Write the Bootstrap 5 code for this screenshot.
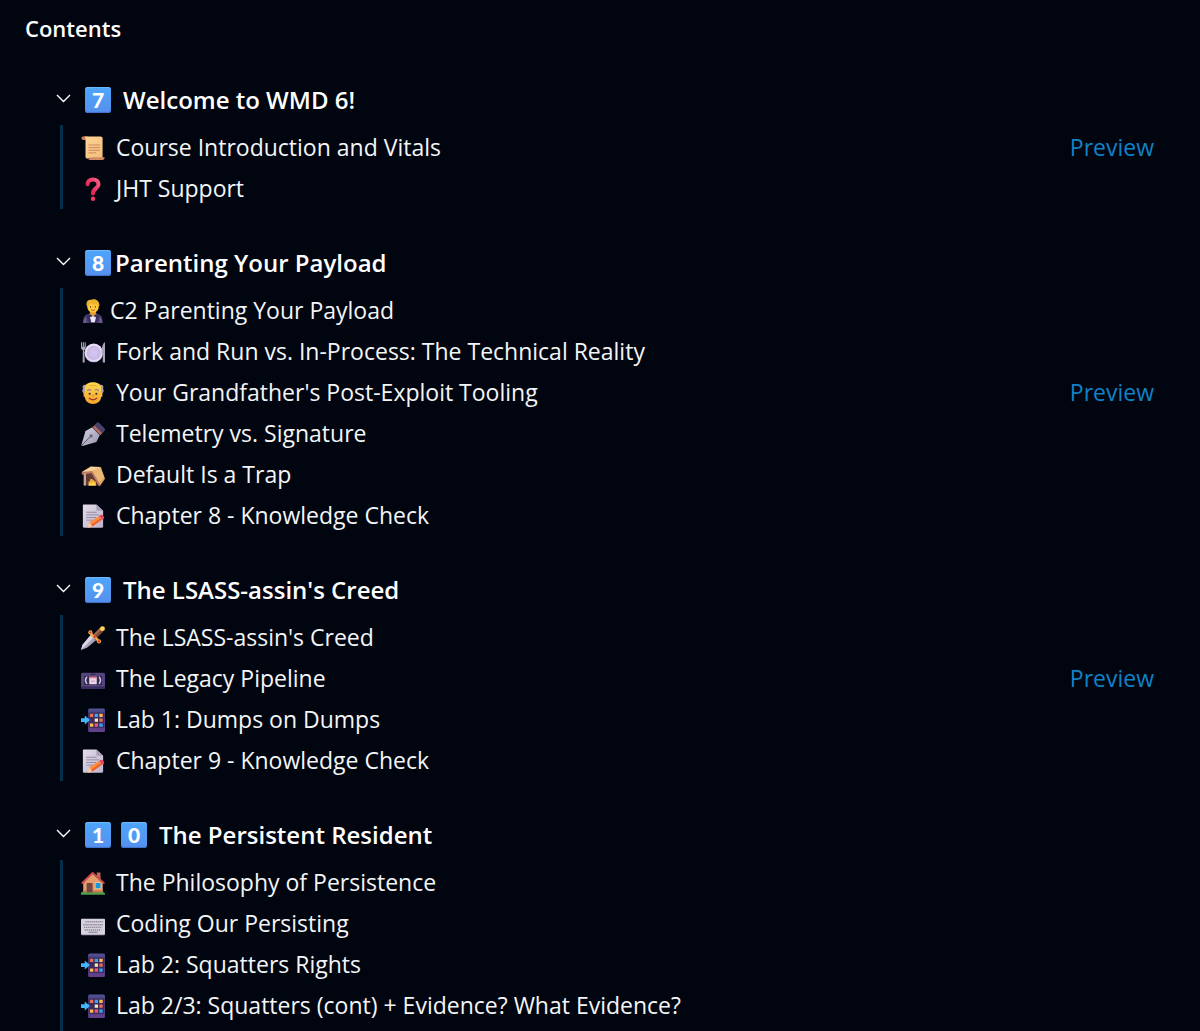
<!DOCTYPE html>
<html lang="en" data-bs-theme="dark">
<head>
<meta charset="utf-8">
<meta name="viewport" content="width=device-width, initial-scale=1">
<title>Contents</title>
<link href="https://cdn.jsdelivr.net/npm/bootstrap@5.3.0/dist/css/bootstrap.min.css" rel="stylesheet">
<style>
  body { background: #01050f; color: #f4f5f7; font-family: "Segoe UI", "Open Sans", "Noto Sans", sans-serif; font-size: 23px; }
  .toc-title { font-size: 22px; font-weight: 600; line-height: 30px; padding: 13px 25px 32px; }
  .toc { padding: 0 46px 0 56px; }
  .chapter + .chapter { margin-top: 29px; }
  .chapter-toggle { height: 50px; color: #fff; font-size: 24px; font-weight: 600; line-height: 50px; }
  .chapter-name { padding-left: 2px; }
  .chevron { width: 15px; height: 9px; margin: 0 14px 3px 0; fill: none; stroke: #fff; stroke-width: 1.4; }
  .chapter-toggle.collapsed .chevron { transform: rotate(-90deg); }
  .keycap { width: 26px; height: 26px; margin-right: 10px; border-radius: 3px; background: linear-gradient(#4da6fb, #5590ee); box-shadow: inset 0 -1px 1px #3f70c8, inset 0 1px 1px #6fbcff; color: #fff; font: 900 21px/26px Lato, sans-serif; text-align: center; }
  .snug { margin-right: 2px; }
  .lessons { margin-left: 4px; border-left: 3px solid #04304d; padding: 2px 0 0 18px; }
  .lesson { min-height: 41px; line-height: 41px; }
  .emoji { width: 24px; height: 24px; margin-right: 11px; }
  .close-set { margin-right: 5px; }
  .preview { color: #1181c8; text-decoration: none; }
  .preview:hover { text-decoration: underline; }
</style>
<script src="https://cdn.jsdelivr.net/npm/bootstrap@5.3.0/dist/js/bootstrap.bundle.min.js"></script>
</head>
<body class="d-flex flex-column min-vh-100">
<svg class="position-absolute" width="0" height="0" aria-hidden="true">
  <defs>
    <linearGradient id="gScroll" x1="0" y1="0" x2="1" y2="1"><stop stop-color="#ffd596"/><stop offset="1" stop-color="#f2bd7b"/></linearGradient>
    <linearGradient id="gRed" x1="1" y1="0" x2="0" y2="1"><stop stop-color="#fb5a83"/><stop offset="1" stop-color="#d61548"/></linearGradient>
    <linearGradient id="gFace" x1="0" y1="0" x2="0" y2="1"><stop stop-color="#ffd94f"/><stop offset="1" stop-color="#f4a52c"/></linearGradient>
    <linearGradient id="gPhone" x1="0" y1="0" x2="0" y2="1"><stop stop-color="#55569d"/><stop offset=".25" stop-color="#463a75"/><stop offset="1" stop-color="#63418e"/></linearGradient>
    <linearGradient id="gPaper" x1="0" y1="0" x2="1" y2="1"><stop stop-color="#e2dcea"/><stop offset="1" stop-color="#bdb4cd"/></linearGradient>
    <linearGradient id="gSteel" x1="0" y1="0" x2="1" y2="1"><stop stop-color="#d6d4e2"/><stop offset="1" stop-color="#9693ad"/></linearGradient>
    <radialGradient id="gPlate"><stop stop-color="#d7c6f2"/><stop offset="1" stop-color="#c6b7e2"/></radialGradient>
  </defs>
  <symbol id="scroll" viewBox="0 0 32 32">
    <path fill="#c67c5d" d="M3 .5h6v4.700H3A2.700 2.700 0 0 1 .4 2.700C.4 1.400 1.400 .5 3 .5z"/>
    <path fill="url(#gScroll)" d="M4 .5h22c1.800 0 2.800 1 2.800 2.800V30H8.500C6.800 30 6 29 6 27.500V4.500C6 2.500 5.500 1.200 4 .5z"/>
    <path fill="#d38a62" d="M12 28.400h19.600c0 2.200-1.300 3.600-3.300 3.600H8.600c2 0 3.400-1.500 3.400-3.600z"/>
    <path stroke="#c77f55" stroke-width="1.200" d="M10 12h15M10 15.500h15M10 19h15M10 22.500h10"/>
  </symbol>
  <symbol id="question" viewBox="0 0 32 32">
    <path fill="none" stroke="url(#gRed)" stroke-width="5.600" stroke-linecap="round" d="M8.700 9.500c.4-4 3.200-6.200 7.300-6.200 4.300 0 7.300 2.500 7.300 6.200 0 5.500-7.500 5.800-7.300 12.300"/>
    <circle cx="16" cy="29" r="3" fill="#ee3863"/>
  </symbol>
  <symbol id="suit" viewBox="0 0 32 32">
    <path fill="#4b4170" d="M3 32v-3.500C3 22 8 19 16 19s12.500 3 12.500 9.500V32z"/>
    <path fill="#70569a" d="M3 32c0-3 1-6 4-8v8zm25.500 0c0-3-1-6-4-8v8z"/>
    <path fill="#eee6f5" d="M11.500 19h9L19 31h-6z"/>
    <path fill="#392f58" d="M11 19l5 3.500 5-3.500v5.500l-5-2-5 2zM10 20l4 12h-3l-4-9zM22 20l-4 12h3l4-9z"/>
    <path fill="#e8992c" d="M12 14h8v6l-4 3-4-3z"/>
    <path fill="#ffc83d" d="M8.500 7c0-4 3-5.500 7.500-5.500S23.500 4 23.500 8v3c0 4-3.500 7-7.500 7s-7.500-3-7.500-7z"/>
    <path fill="#eeb22d" d="M7.500 9C6.500 3.500 9 1 13 1c4-2 12-.5 11.500 8l-2 1.500V7.200c-4 .5-8-.2-10-1.700-1 2-2.700 2.200-3.200 5z"/>
    <path stroke="#714333" stroke-width="1.500" stroke-linecap="round" d="M12.700 10v1M19.200 10v1"/><path fill="none" stroke="#bd4a24" stroke-width="1.200" d="M13.500 14.500q2.500 1.500 5 0"/>
  </symbol>
  <symbol id="plate" viewBox="0 0 32 32">
    <circle cx="17" cy="17.500" r="12.300" fill="#bcabd9"/><circle cx="17" cy="16.800" r="12" fill="#e7dcf5"/><circle cx="17" cy="17.300" r="9.500" fill="url(#gPlate)"/>
    <path fill="#aaa5b8" d="M0 3h1.300v6h1V3h1.500v6h1V3H6.300v7c0 2-1 3-2 3.500L5 30H2.200l.3-16.500C1 13 0 12 0 10zM32 3v27h-3V18h-1.500C27.500 11 28.500 4.500 32 3z"/>
  </symbol>
  <symbol id="grandpa" viewBox="0 0 32 32">
    <path fill="#a89fac" d="M5 5C2 5 1.200 8 2.700 10 .8 13 2 16 4.500 17h23c2.500-1 3.700-4 1.800-7C30.800 8 29.500 5 26.500 5z"/>
    <path fill="url(#gFace)" d="M5 11C5 5 9 1.800 16 1.800S27 5 27 11v5h1.500v5H27c-.5 6-5 9.500-11 9.500S5.500 27 5 21H3.500v-5H5z"/>
    <path stroke="#ad8b91" stroke-width="2" stroke-linecap="round" fill="none" d="M9 12.500q2-2 4-.5M19 12q2-1.500 4 .5"/>
    <circle cx="11.500" cy="17" r="1.500" fill="#49313c"/><circle cx="20.500" cy="17" r="1.500" fill="#49313c"/>
    <path fill="none" stroke="#d77929" stroke-width="1.400" d="M15 19q1 1.500 2 0"/><path fill="none" stroke="#a23e27" stroke-width="1.800" stroke-linecap="round" d="M11 23q5 4 10 0"/>
    <path fill="none" stroke="#dd9b2a" d="M11 6.500q5-1.500 10 0"/>
  </symbol>
  <symbol id="pen" viewBox="0 0 32 32">
    <path fill="#49416b" d="M17 5l4-4c1-1 2-1 3 0l7.500 7.500c1 1 .7 2 0 3L28 15.500z"/>
    <path fill="#b66c5a" d="M15.500 6.800L18 4.500 28.200 15l-2.600 2.500z"/>
    <path fill="url(#gSteel)" d="M15 7L25 17.500l-4.500 9L2 32l-1.500-1.500L6 12z"/>
    <path stroke="#5d5872" stroke-width="1.300" d="M1 31l11-11"/><circle cx="13.500" cy="18.500" r="2.200" fill="#686179"/>
  </symbol>
  <symbol id="hut" viewBox="0 0 32 32">
    <path fill="#5f3b35" d="M4 14l11-3 9 19H4z"/>
    <path fill="#f0ad36" d="M10 30v-5l2-1 .8-3 3 1 2.200 2 2 1v5z"/><path fill="#ffda52" d="M10 30l2-4 2 2 2-3 4 5z"/>
    <path fill="#f7d19a" d="M1 12L13 4.500l13.500 .7L15 12z"/>
    <path fill="#dda361" d="M15 11l11.500-5.800L32 21l-7 10z"/>
    <path fill="#e9b877" d="M14 10.500l11.500-5.300L30.500 19l-7 8z"/>
    <path fill="#bd7960" d="M1 12l14-1.500 11 19-2 1.500L14 13.500 1 15.500z"/><path fill="#c9a39a" d="M3.500 14h3.200v16H3.500z"/>
  </symbol>
  <symbol id="memo" viewBox="0 0 32 32">
    <path fill="url(#gPaper)" d="M4 .5h16.500L29.500 9v21c0 1-.5 1.500-1.500 1.500H4c-1 0-1.500-.5-1.500-1.500V2C2.500 1 3 .5 4 .5z"/>
    <path fill="#a99db8" d="M20.500 .5l9 8.500h-7c-1.500 0-2-.7-2-2z"/>
    <path stroke="#8e859c" stroke-width="1.200" d="M7 11h14M7 14.500h17M7 18h13M7 21.500h9"/>
    <path fill="#ff8b3d" d="M11 24.500L24 16l4 5-13 9-5.500 1.500z"/><path fill="#e9612e" d="M13.500 28L26 19l2 2-13 9z"/><path fill="#f7cda7" d="M11 24.500L15 30l-6 1.500z"/><path fill="#e34261" d="M25.500 15c2-2.500 7 2 5 4.500l-2 1.500-4.500-5z"/>
  </symbol>
  <symbol id="dagger" viewBox="0 0 32 32">
    <path fill="#a8a3bb" d="M13 12l7 7L8 29 0 32l2-7z"/><path fill="#dbd7e5" d="M13 12l3.500 3.500L0 32l2-7z"/>
    <path fill="#7d4a3b" d="M16.500 11.500L25 2.500 30 7l-9 9z"/><path fill="#a86b4a" d="M16.500 11.500L25 2.500l2 2-9 9z"/>
    <path fill="none" stroke="#f3a93a" stroke-width="3.500" stroke-linecap="round" d="M12.500 8.500q1 3.500 5 6t6 6"/>
    <circle cx="12.500" cy="8.500" r="2.800" fill="#ffbd45"/><circle cx="24" cy="20.500" r="2.800" fill="#f5a039"/><circle cx="12.500" cy="8.500" r="1.500" fill="#d72f3e"/><circle cx="24" cy="20.500" r="1.500" fill="#d72f3e"/><circle cx="18" cy="14.500" r="1.400" fill="#d72f3e"/>
    <circle cx="28.600" cy="3.500" r="3.300" fill="#ffd35a"/>
  </symbol>
  <symbol id="tape" viewBox="0 0 32 32">
    <rect y="7.500" width="32" height="21.500" rx="2" fill="#54447f"/><path fill="#392d5f" d="M0 26h32v1.500c0 1-.8 1.500-2 1.500H2c-1.200 0-2-.5-2-1.500z"/>
    <path fill="#332b4c" d="M4 12h24v12H4zM13 9h6v1.500h-6z"/>
    <path fill="none" stroke="#d8cae7" stroke-width="2" d="M8 13q-4 4.500 0 9.500M24 13q4 4.500 0 9.500"/>
    <rect x="11" y="13" width="10" height="10" fill="#e8d9ef"/><path fill="#ec6f92" d="M11 13h10v2H11z"/><path fill="#d8a8cb" d="M13 18h6v2h-6z"/>
  </symbol>
  <symbol id="calling" viewBox="0 0 32 32">
    <rect x="9.500" y=".5" width="22.500" height="31.500" rx="2" fill="url(#gPhone)"/>
    <path fill="#3b2c5b" d="M11 6h19.500v20.500H11z"/>
    <path fill="#f06d52" d="M12 7.500h4.400v4.400H12zM24.500 14h4.400v4.400h-4.400z"/><path fill="#39a5eb" d="M18.300 7.500h4.400v4.400h-4.400zM24.500 20.500h4.400v4.400h-4.400z"/><path fill="#ffb84c" d="M24.500 7.500h4.400v4.400h-4.400zM12 20.500h4.400v4.400H12z"/><path fill="#f6e9ac" d="M18.300 14h4.400v4.400h-4.400z"/><path fill="#ec5876" d="M18.300 20.500h4.400v4.400h-4.400z"/>
    <path fill="#42b6fa" d="M0 13.500h5V10l7 6-7 6v-3.500H0z"/>
  </symbol>
  <symbol id="house" viewBox="0 0 32 32">
    <path fill="#b96c50" d="M21 2h5v10h-5z"/><path fill="#e3a06c" d="M3 16L15.500 3.500 29 16v13H3z"/>
    <path fill="#c87952" d="M3 26h26v3H3z"/><path fill="none" stroke="#d04a50" stroke-width="2.500" stroke-linejoin="round" stroke-linecap="round" d="M1.700 16L15.500 2.500 30.300 16"/>
    <path fill="#784640" d="M7.500 16h8v13h-8z"/><path fill="#eec79a" d="M18.500 15h8.500v9h-8.500z"/><path fill="#1998df" d="M19.500 16h6.500v7h-6.500z"/>
    <path fill="#4f9e4a" d="M0 29c2-2 5-1 7-.3h18c2-1 5-1.300 7 .8v2H0z"/>
  </symbol>
  <symbol id="keyboard" viewBox="0 0 32 32">
    <rect y="10" width="32" height="21" rx="1.500" fill="#aaa2b7"/><rect y="9" width="32" height="20.500" rx="1.500" fill="#d6d1dc"/>
    <path fill="none" stroke="#8b8496" stroke-width="1.800" stroke-dasharray="1.700 1" d="M6 13h23M3 17h26M4 20.500h24M5 24h22"/><path stroke="#8b8496" stroke-width="1.500" d="M10 27h12"/>
  </symbol>
</svg>

<h1 class="toc-title m-0">Contents</h1>
<main class="toc d-flex flex-column flex-grow-1">
  <section class="chapter">
    <button class="chapter-toggle btn border-0 p-0 w-100 d-flex align-items-center text-start" type="button" data-bs-toggle="collapse" data-bs-target="#ch7" aria-expanded="true" aria-controls="ch7">
      <svg class="chevron" viewBox="0 0 15 9" aria-hidden="true"><path d="M1 1l6.500 6.500L14 1"/></svg><span class="keycap">7</span><span class="chapter-name">Welcome to WMD 6!</span>
    </button>
    <ul id="ch7" class="lessons list-unstyled mb-0 collapse show">
      <li class="lesson d-flex align-items-center"><svg class="emoji flex-shrink-0" aria-hidden="true"><use href="#scroll"/></svg><span>Course Introduction and Vitals</span><a class="preview ms-auto" href="#intro">Preview</a></li>
      <li class="lesson d-flex align-items-center"><svg class="emoji flex-shrink-0" aria-hidden="true"><use href="#question"/></svg><span>JHT Support</span></li>
    </ul>
  </section>
  <section class="chapter">
    <button class="chapter-toggle btn border-0 p-0 w-100 d-flex align-items-center text-start" type="button" data-bs-toggle="collapse" data-bs-target="#ch8" aria-expanded="true" aria-controls="ch8">
      <svg class="chevron" viewBox="0 0 15 9" aria-hidden="true"><path d="M1 1l6.500 6.500L14 1"/></svg><span class="keycap snug">8</span><span class="chapter-name">Parenting Your Payload</span>
    </button>
    <ul id="ch8" class="lessons list-unstyled mb-0 collapse show">
      <li class="lesson d-flex align-items-center"><svg class="emoji close-set flex-shrink-0" aria-hidden="true"><use href="#suit"/></svg><span>C2 Parenting Your Payload</span></li>
      <li class="lesson d-flex align-items-center"><svg class="emoji flex-shrink-0" aria-hidden="true"><use href="#plate"/></svg><span>Fork and Run vs. In-Process: The Technical Reality</span></li>
      <li class="lesson d-flex align-items-center"><svg class="emoji flex-shrink-0" aria-hidden="true"><use href="#grandpa"/></svg><span>Your Grandfather's Post-Exploit Tooling</span><a class="preview ms-auto" href="#tooling">Preview</a></li>
      <li class="lesson d-flex align-items-center"><svg class="emoji flex-shrink-0" aria-hidden="true"><use href="#pen"/></svg><span>Telemetry vs. Signature</span></li>
      <li class="lesson d-flex align-items-center"><svg class="emoji flex-shrink-0" aria-hidden="true"><use href="#hut"/></svg><span>Default Is a Trap</span></li>
      <li class="lesson d-flex align-items-center"><svg class="emoji flex-shrink-0" aria-hidden="true"><use href="#memo"/></svg><span>Chapter 8 - Knowledge Check</span></li>
    </ul>
  </section>
  <section class="chapter">
    <button class="chapter-toggle btn border-0 p-0 w-100 d-flex align-items-center text-start" type="button" data-bs-toggle="collapse" data-bs-target="#ch9" aria-expanded="true" aria-controls="ch9">
      <svg class="chevron" viewBox="0 0 15 9" aria-hidden="true"><path d="M1 1l6.500 6.500L14 1"/></svg><span class="keycap">9</span><span class="chapter-name">The LSASS-assin's Creed</span>
    </button>
    <ul id="ch9" class="lessons list-unstyled mb-0 collapse show">
      <li class="lesson d-flex align-items-center"><svg class="emoji flex-shrink-0" aria-hidden="true"><use href="#dagger"/></svg><span>The LSASS-assin's Creed</span></li>
      <li class="lesson d-flex align-items-center"><svg class="emoji flex-shrink-0" aria-hidden="true"><use href="#tape"/></svg><span>The Legacy Pipeline</span><a class="preview ms-auto" href="#pipeline">Preview</a></li>
      <li class="lesson d-flex align-items-center"><svg class="emoji flex-shrink-0" aria-hidden="true"><use href="#calling"/></svg><span>Lab 1: Dumps on Dumps</span></li>
      <li class="lesson d-flex align-items-center"><svg class="emoji flex-shrink-0" aria-hidden="true"><use href="#memo"/></svg><span>Chapter 9 - Knowledge Check</span></li>
    </ul>
  </section>
  <section class="chapter d-flex flex-column flex-grow-1">
    <button class="chapter-toggle btn border-0 p-0 w-100 d-flex align-items-center text-start" type="button" data-bs-toggle="collapse" data-bs-target="#ch10" aria-expanded="true" aria-controls="ch10">
      <svg class="chevron" viewBox="0 0 15 9" aria-hidden="true"><path d="M1 1l6.500 6.500L14 1"/></svg><span class="keycap">1</span><span class="keycap">0</span><span class="chapter-name">The Persistent Resident</span>
    </button>
    <ul id="ch10" class="lessons list-unstyled mb-0 flex-grow-1 collapse show">
      <li class="lesson d-flex align-items-center"><svg class="emoji flex-shrink-0" aria-hidden="true"><use href="#house"/></svg><span>The Philosophy of Persistence</span></li>
      <li class="lesson d-flex align-items-center"><svg class="emoji flex-shrink-0" aria-hidden="true"><use href="#keyboard"/></svg><span>Coding Our Persisting</span></li>
      <li class="lesson d-flex align-items-center"><svg class="emoji flex-shrink-0" aria-hidden="true"><use href="#calling"/></svg><span>Lab 2: Squatters Rights</span></li>
      <li class="lesson d-flex align-items-center"><svg class="emoji flex-shrink-0" aria-hidden="true"><use href="#calling"/></svg><span>Lab 2/3: Squatters (cont) + Evidence? What Evidence?</span></li>
    </ul>
  </section>
</main>
</body>
</html>
